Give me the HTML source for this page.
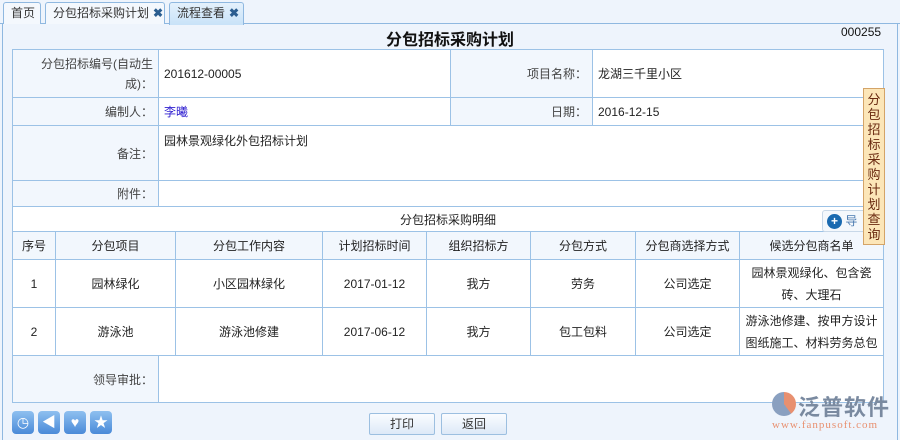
<!DOCTYPE html>
<html><head><meta charset="utf-8"><style>
*{margin:0;padding:0;box-sizing:border-box}
body{width:900px;height:440px;background:#eef4fc;font-family:"Liberation Sans","Noto Sans CJK SC",sans-serif;font-size:12px;color:#333;position:relative;overflow:hidden}
.a{position:absolute}
.tab{position:absolute;top:2px;height:22px;border:1px solid #8fb8e0;border-bottom:none;border-radius:3px 3px 0 0;background:#f4f8fd;line-height:20px;padding:0 7px;font-size:12px;color:#333;white-space:nowrap}
.tab b{color:#2a5d90;margin-left:4px;font-size:12px}
table{border-collapse:collapse;position:absolute;left:12px;width:872px;background:#fff;table-layout:fixed}
td{border:1px solid #9cc2e6;padding:0 5px;font-size:12px;color:#222}
.l{background:#f2f7fd;text-align:right;color:#444}
.c td{text-align:center}
.btn{position:absolute;top:413px;width:66px;height:22px;border:1px solid #9cbfe0;border-radius:2px;background:linear-gradient(#fafcff,#dde9f7);text-align:center;line-height:20px}
.ic{position:absolute;top:411px;width:22px;height:23px;border-radius:4px;background:linear-gradient(#8ec0f0,#4a8ad8);color:#fff;text-align:center;line-height:23px;font-size:14px}
</style></head><body>
<div class="a" style="left:0;top:23px;width:900px;height:1px;background:#8fb8e0"></div>
<div class="a" style="left:2px;top:23px;width:1px;height:417px;background:#8fb8e0"></div>
<div class="a" style="left:897px;top:23px;width:1px;height:417px;background:#8fb8e0"></div>
<div class="tab" style="left:3px;width:38px">首页</div>
<div class="tab" style="left:45px;width:120px">分包招标采购计划<b>✖</b></div>
<div class="tab" style="left:169px;width:75px;background:linear-gradient(#e4f1fc,#c8e2f8);height:23px">流程查看<b>✖</b></div>
<div class="a" style="left:0;top:26px;width:900px;text-align:center;font-size:16px;font-weight:bold;color:#111">分包招标采购计划</div>
<div class="a" style="left:841px;top:25px;font-size:12px;color:#111">000255</div>
<table style="top:49px">
<colgroup><col style="width:146px"><col style="width:292px"><col style="width:142px"><col></colgroup>
<tr style="height:48px"><td class="l" style="line-height:20px">分包招标编号(自动生成)：</td><td>201612-00005</td><td class="l">项目名称：</td><td>龙湖三千里小区</td></tr>
<tr style="height:28px"><td class="l">编制人：</td><td style="color:#3020d0">李曦</td><td class="l">日期：</td><td>2016-12-15</td></tr>
<tr style="height:55px"><td class="l">备注：</td><td colspan="3" style="vertical-align:top;padding-top:6px">园林景观绿化外包招标计划</td></tr>
<tr style="height:26px"><td class="l">附件：</td><td colspan="3"></td></tr>
</table>
<table style="top:206px" class="c">
<colgroup><col style="width:43px"><col style="width:120px"><col style="width:147px"><col style="width:104px"><col style="width:104px"><col style="width:105px"><col style="width:104px"><col></colgroup>
<tr style="height:25px"><td colspan="8">分包招标采购明细</td></tr>
<tr style="height:28px;background:#f2f7fd"><td>序号</td><td>分包项目</td><td>分包工作内容</td><td>计划招标时间</td><td>组织招标方</td><td>分包方式</td><td>分包商选择方式</td><td>候选分包商名单</td></tr>
<tr style="height:48px"><td>1</td><td>园林绿化</td><td>小区园林绿化</td><td>2017-01-12</td><td>我方</td><td>劳务</td><td>公司选定</td><td style="line-height:22px;padding:0 3px">园林景观绿化、包含瓷砖、大理石</td></tr>
<tr style="height:48px"><td>2</td><td>游泳池</td><td>游泳池修建</td><td>2017-06-12</td><td>我方</td><td>包工包料</td><td>公司选定</td><td style="line-height:22px;padding:0 2px">游泳池修建、按甲方设计图纸施工、材料劳务总包</td></tr>
</table>
<table style="top:355px">
<colgroup><col style="width:146px"><col></colgroup>
<tr style="height:47px"><td class="l">领导审批：</td><td></td></tr>
</table>
<div class="a" style="left:822px;top:210px;width:48px;height:22px;border:1px solid #c8d8e8;border-radius:3px;background:#f4f8fc;padding-left:4px;line-height:20px;color:#4a7ab0"><span style="display:inline-block;width:15px;height:15px;border-radius:50%;background:#1a6ab0;color:#fff;text-align:center;line-height:15px;font-weight:bold;vertical-align:middle">+</span> 导</div>
<div class="a" style="left:863px;top:88px;width:22px;height:157px;background:#fce6b8;border:1px solid #d4a468;text-align:center;font-size:13px;line-height:15px;color:#6a2a10;padding-top:3px">分<br>包<br>招<br>标<br>采<br>购<br>计<br>划<br>查<br>询</div>
<div class="ic" style="left:12px">◷</div>
<div class="ic" style="left:38px">◀</div>
<div class="ic" style="left:64px">♥</div>
<div class="ic" style="left:90px">★</div>
<div class="btn" style="left:369px">打印</div>
<div class="btn" style="left:441px">返回</div>
<div class="a" style="left:772px;top:392px;width:24px;height:24px;border-radius:50%;background:conic-gradient(#e89070 0 40%,#8aa0c0 40% 100%)"></div>
<div class="a" style="left:798px;top:390px;font-size:22px;color:#7a8aa0;font-weight:bold;letter-spacing:1px">泛普软件</div>
<div class="a" style="left:772px;top:419px;font-size:11px;color:#e89070;font-family:'Liberation Serif',serif;letter-spacing:1px">www.fanpusoft.com</div>
</body></html>
